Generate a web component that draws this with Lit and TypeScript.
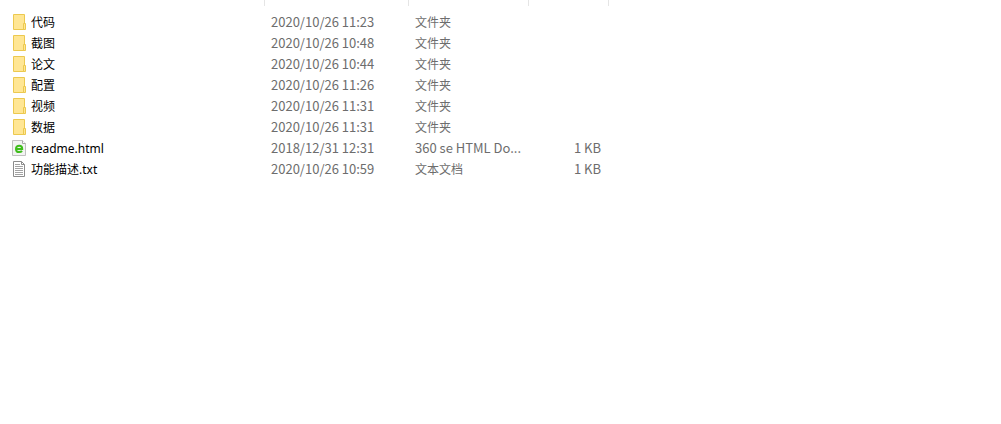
import { LitElement, html, css, svg } from "lit";
import { customElement } from "lit/decorators.js";

type Kind = "folder" | "html" | "text";

interface Entry {
  kind: Kind;
  name: string;
  modified: string;
  type: string;
  size: string;
}

const entries: Entry[] = [
  { kind: "folder", name: "代码", modified: "2020/10/26 11:23", type: "文件夹", size: "" },
  { kind: "folder", name: "截图", modified: "2020/10/26 10:48", type: "文件夹", size: "" },
  { kind: "folder", name: "论文", modified: "2020/10/26 10:44", type: "文件夹", size: "" },
  { kind: "folder", name: "配置", modified: "2020/10/26 11:26", type: "文件夹", size: "" },
  { kind: "folder", name: "视频", modified: "2020/10/26 11:31", type: "文件夹", size: "" },
  { kind: "folder", name: "数据", modified: "2020/10/26 11:31", type: "文件夹", size: "" },
  { kind: "html", name: "readme.html", modified: "2018/12/31 12:31", type: "360 se HTML Do...", size: "1 KB" },
  { kind: "text", name: "功能描述.txt", modified: "2020/10/26 10:59", type: "文本文档", size: "1 KB" },
];

const glyphs = {
  folder: svg`
    <path d="M1.5 .5h11v15h-11z" fill="#ffe694" stroke="#ecc94f"/>
    <path d="M11.5 9.5h2v6h-2z" fill="#ffe694" stroke="#ecc94f"/>`,
  html: svg`
    <path d="M.5 .5h10l3 3v12h-13z" fill="#f3f3f3" stroke="#c0c0c0"/>
    <path d="M10.5 .5v3h3" fill="#fff" stroke="#a8a8a8"/>
    <path d="M4 8.9h6.2c0-2-1.2-3.2-3-3.2s-3.200 1.300-3.200 3.200 1.300 3.200 3.200 3.200c1.200 0 2.200-.4 2.800-1.200" fill="none" stroke="#3fbd1c" stroke-width="2"/>`,
  text: svg`
    <path d="M1.5 .5h8l3 3v12h-11z" fill="#fff" stroke="#8c8c8c"/>
    <path d="M9.5 .5v3h3" fill="none" stroke="#8c8c8c"/>
    <path d="M3 3.500h5M3 5.500h8M3 7.500h8M3 9.500h8M3 11.500h8M3 13.500h8" stroke="#a3a3a3"/>`,
};

@customElement("app-root")
export class AppRoot extends LitElement {
  static styles = css`
    :host {
      display: block;
      min-height: 100vh;
      background: #fff;
      color: #6d6d6d;
      font: 12px/20px "Noto Sans", "Noto Sans CJK SC", sans-serif;
    }
    .list {
      width: 609px;
      max-width: 100%;
      table-layout: fixed;
      border-collapse: separate;
      border-spacing: 0;
    }
    .name { width: 265px; }
    .modified { width: 144px; }
    .type { width: 120px; }
    .size { width: 80px; }
    th {
      height: 6px;
      padding: 0;
      border-right: 1px solid #e5e5e5;
      box-sizing: border-box;
    }
    td {
      height: 21px;
      box-sizing: border-box;
      padding: 1px 0 0 6px;
      vertical-align: top;
      white-space: nowrap;
    }
    .gap td {
      height: 6px;
      padding: 0;
    }
    .latin {
      padding-top: 0;
      font-family: "Noto Sans CJK SC", sans-serif;
      font-size: 13px;
    }
    .amount {
      padding: 0 8px 0 0;
      text-align: right;
    }
    .title {
      padding-left: 12px;
      color: #000;
    }
    .label {
      display: flex;
      align-items: flex-start;
      gap: 4px;
    }
    .icon {
      display: block;
      flex: none;
      margin-top: 1px;
    }
  `;

  render() {
    return html`
      <table class="list">
        <thead>
          <tr>
            <th class="name" scope="col" aria-label="名称"></th>
            <th class="modified" scope="col" aria-label="修改日期"></th>
            <th class="type" scope="col" aria-label="类型"></th>
            <th class="size" scope="col" aria-label="大小"></th>
          </tr>
        </thead>
        <tbody>
          <tr class="gap" aria-hidden="true"><td colspan="4"></td></tr>
          ${entries.map(
            (e) => html`
              <tr>
                <td class="title">
                  <div class="label">
                    <svg class="icon" width="15" height="16" viewBox="0 0 15 16" aria-hidden="true">${glyphs[e.kind]}</svg>
                    <span>${e.name}</span>
                  </div>
                </td>
                <td class="latin">${e.modified}</td>
                <td class=${e.kind === "html" ? "latin" : ""}>${e.type}</td>
                <td class="latin amount">${e.size}</td>
              </tr>
            `,
          )}
        </tbody>
      </table>
    `;
  }
}
